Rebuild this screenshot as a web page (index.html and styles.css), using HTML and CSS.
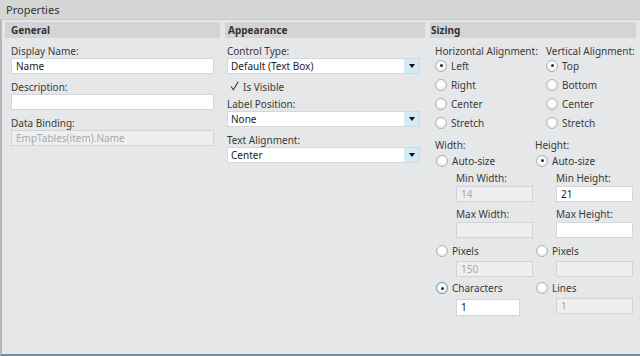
FILE: index.html
```html
<!DOCTYPE html>
<html lang="en">
<head>
    <meta charset="UTF-8">
    <title>Properties</title>
    <link rel="stylesheet" href="styles.css">
</head>
<body>
    <div class="panel">
        <div class="titlebar">Properties</div>

        <div class="content">
            <div class="section general">
                <div class="section-header">General</div>
                <label class="field-label">Display Name:</label>
                <div class="input">Name</div>
                <label class="field-label">Description:</label>
                <div class="input"></div>
                <label class="field-label">Data Binding:</label>
                <div class="input disabled">EmpTables(item).Name</div>
            </div>

            <div class="section appearance">
                <div class="section-header">Appearance</div>
                <label class="field-label">Control Type:</label>
                <div class="dropdown">
                    <span class="dropdown-text">Default (Text Box)</span>
                    <span class="dropdown-button"><span class="arrow"></span></span>
                </div>
                <div class="checkbox-row">
                    <svg class="check" width="9" height="10" viewBox="0 0 9 10">
                        <path d="M1 5.5 L3.4 8.8 L8.2 0.8" fill="none" stroke="#3c3c3c" stroke-width="1.1"/>
                    </svg>
                    <span>Is Visible</span>
                </div>
                <label class="field-label tight">Label Position:</label>
                <div class="dropdown">
                    <span class="dropdown-text">None</span>
                    <span class="dropdown-button"><span class="arrow"></span></span>
                </div>
                <label class="field-label">Text Alignment:</label>
                <div class="dropdown">
                    <span class="dropdown-text">Center</span>
                    <span class="dropdown-button"><span class="arrow"></span></span>
                </div>
            </div>

            <div class="section sizing">
                <div class="section-header">Sizing</div>

                <div class="align-grid">
                    <div class="align-col">
                        <div class="align-label">Horizontal Alignment:</div>
                        <div class="radio-list">
                            <div class="radio-row"><span class="radio checked"></span>Left</div>
                            <div class="radio-row"><span class="radio"></span>Right</div>
                            <div class="radio-row"><span class="radio"></span>Center</div>
                            <div class="radio-row"><span class="radio"></span>Stretch</div>
                        </div>
                    </div>
                    <div class="align-col">
                        <div class="align-label">Vertical Alignment:</div>
                        <div class="radio-list">
                            <div class="radio-row"><span class="radio checked"></span>Top</div>
                            <div class="radio-row"><span class="radio"></span>Bottom</div>
                            <div class="radio-row"><span class="radio"></span>Center</div>
                            <div class="radio-row"><span class="radio"></span>Stretch</div>
                        </div>
                    </div>
                </div>

                <div class="size-grid">
                    <div class="size-col">
                        <div class="size-title">Width:</div>
                        <div class="radio-row size-radio"><span class="radio"></span>Auto-size</div>
                        <div class="sub-label">Min Width:</div>
                        <div class="input small disabled">14</div>
                        <div class="sub-label spaced">Max Width:</div>
                        <div class="input small disabled"></div>
                        <div class="radio-row size-radio spaced"><span class="radio"></span>Pixels</div>
                        <div class="input small disabled">150</div>
                        <div class="radio-row size-radio mid"><span class="radio checked focus"></span>Characters</div>
                        <div class="input small chars">1</div>
                    </div>
                    <div class="size-col">
                        <div class="size-title">Height:</div>
                        <div class="radio-row size-radio"><span class="radio checked"></span>Auto-size</div>
                        <div class="sub-label">Min Height:</div>
                        <div class="input small">21</div>
                        <div class="sub-label spaced">Max Height:</div>
                        <div class="input small"></div>
                        <div class="radio-row size-radio spaced"><span class="radio"></span>Pixels</div>
                        <div class="input small disabled"></div>
                        <div class="radio-row size-radio mid"><span class="radio"></span>Lines</div>
                        <div class="input small disabled lines">1</div>
                    </div>
                </div>
            </div>
        </div>
    </div>
</body>
</html>
```

FILE: styles.css
```css
body {
    margin: 0;
    padding: 0;
    font-family: "Noto Sans", "Open Sans", sans-serif;
    font-size: 10px;
    color: #3a3a3a;
    background-color: #e6e7e9;
}

.panel {
    width: 640px;
    height: 356px;
    box-sizing: border-box;
    display: flex;
    flex-direction: column;
}

.titlebar {
    height: 19px;
    line-height: 20px;
    padding-left: 6px;
    font-size: 11px;
    color: #333;
    background-color: #d6d6d6;
    border-bottom: 1px solid #c8c9cb;
}

.content {
    flex: 1;
    display: flex;
    gap: 5px;
    padding: 2px 4px 0 3px;
    background-color: #e6e7e9;
    border-left: 2px solid #b4b8bc;
    border-bottom: 2px solid #7d8b99;
}

.section {
    display: flex;
    flex-direction: column;
}

.general {
    width: 215px;
    padding: 0 6px;
    box-sizing: border-box;
}

.appearance {
    width: 200px;
    padding: 0 5px 0 2px;
    box-sizing: border-box;
}

.sizing {
    width: 206px;
    padding-left: 5px;
    box-sizing: border-box;
}

.section-header {
    height: 16px;
    line-height: 16px;
    font-weight: bold;
    color: #333;
    background-color: #d3d4d6;
}

.general .section-header {
    margin: 0 -6px;
    padding-left: 6px;
}

.appearance .section-header {
    margin: 0 -5px 0 -2px;
    padding-left: 3px;
}

.sizing .section-header {
    margin-left: -5px;
    padding-left: 1px;
}

.field-label {
    display: block;
    margin-top: 7px;
    line-height: 13px;
}

.field-label.tight {
    margin-top: 2px;
}

.input {
    height: 16px;
    line-height: 15px;
    box-sizing: border-box;
    padding-left: 4px;
    background: #fff;
    border: 1px solid #d6d7d9;
    color: #222;
}

.input.disabled {
    background: #efefef;
    color: #a9a9a9;
    border-color: #d2d3d5;
}

.dropdown {
    height: 16px;
    display: flex;
    box-sizing: border-box;
    background: #fff;
    border: 1px solid #d6d7d9;
    color: #222;
}

.dropdown-text {
    flex: 1;
    line-height: 14px;
    padding-left: 3px;
}

.dropdown-button {
    width: 15px;
    display: flex;
    align-items: center;
    justify-content: center;
    background-color: #d5eaf7;
}

.arrow {
    width: 0;
    height: 0;
    border-left: 3px solid transparent;
    border-right: 3px solid transparent;
    border-top: 4px solid #111;
}

.checkbox-row {
    margin-top: 4px;
    height: 18px;
    display: flex;
    align-items: center;
    gap: 4px;
    padding-left: 3px;
}

.check {
    margin-top: -2px;
}

.align-grid {
    display: grid;
    grid-template-columns: 111px 1fr;
}

.align-label {
    margin-top: 7px;
    line-height: 12px;
}

.radio-list {
    margin-top: -1px;
}

.radio-row {
    height: 19px;
    display: flex;
    align-items: center;
    gap: 4px;
}

.radio {
    width: 12px;
    height: 12px;
    box-sizing: border-box;
    border-radius: 50%;
    border: 1px solid #aeb2b7;
    background: radial-gradient(circle at 50% 40%, #ffffff 30%, #dde0e4 100%);
    display: flex;
    align-items: center;
    justify-content: center;
}

.radio.checked::after {
    content: "";
    width: 3px;
    height: 3px;
    border-radius: 50%;
    background-color: #2a2a2a;
}

.radio.focus {
    border-color: #6f9cb5;
    box-shadow: 0 0 1px #9cc3d8;
}

.size-grid {
    display: grid;
    grid-template-columns: 100px 1fr;
}

.size-col {
    display: flex;
    flex-direction: column;
}

.size-title {
    margin-top: 6px;
    line-height: 14px;
}

.size-radio {
    height: 17px;
    padding-left: 1px;
}

.size-radio.spaced {
    height: 18px;
    margin-top: 4px;
}

.size-radio.mid {
    height: 18px;
    margin-top: 2px;
}

.sub-label {
    margin-top: 2px;
    margin-left: 21px;
    line-height: 14px;
}

.sub-label.spaced {
    margin-top: 5px;
}

.input.small {
    margin-top: 1px;
    margin-left: 21px;
    width: 77px;
}

.input.chars {
    margin-top: 2px;
    width: 64px;
    height: 17px;
}

.size-col .input.lines {
    margin-top: 1px;
}
```
